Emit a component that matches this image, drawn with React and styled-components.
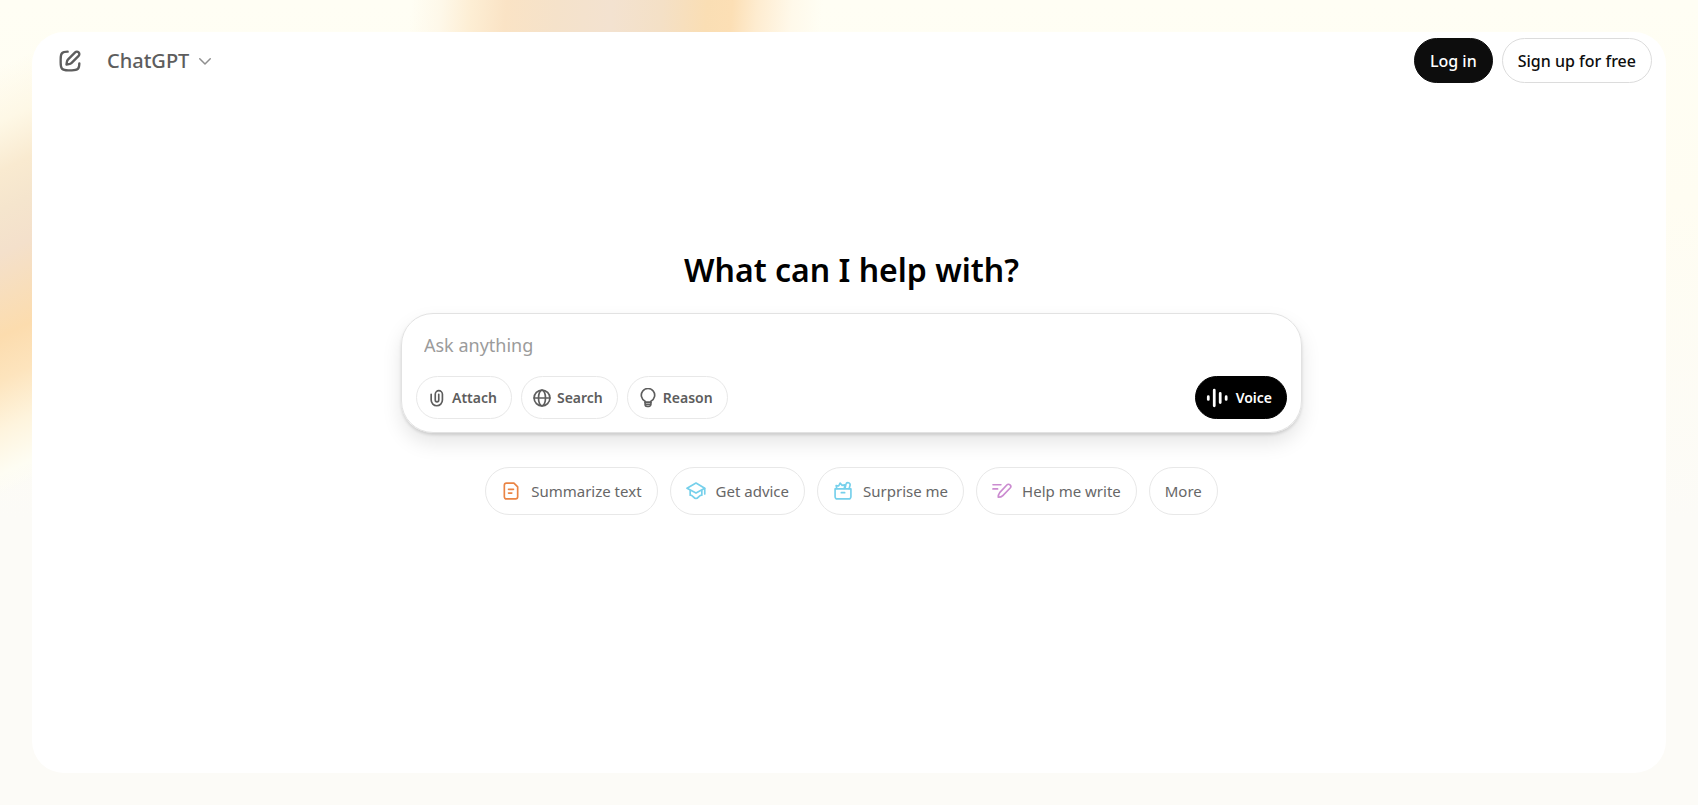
import React from 'react';
import styled, {createGlobalStyle, css, ThemeProvider} from 'styled-components';

const theme = {
    colors: {
        black: '#000000',
        ink: '#0d0d0d',
        darkGrey: '#5d5d5d',
        grey: '#9b9b9b',
        border: '#e8e8e8',
        white: '#ffffff',
    },
    font: '"Noto Sans", "Open Sans", sans-serif',
};

const GlobalStyle = createGlobalStyle`
  * {
    box-sizing: border-box;
  }
  body {
    margin: 0;
    font-family: ${({theme}) => theme.font};
    color: ${({theme}) => theme.colors.ink};
  }
  button, input {
    font-family: inherit;
  }
`;

const Page = styled.div`
  min-height: 100vh;
  display: flex;
  padding: 32px;
  background:
    linear-gradient(95deg, transparent 410px, #fef8e9 440px, #fdeed4 470px, #fae3c5 505px, #f5e2ca 555px, #f3e2d0 610px, #f4e0c6 660px, #fadeb4 705px, #fcdfb5 730px, #feecd0 755px, #fff9ea 790px, transparent 820px) top left / 100% 32px no-repeat,
    linear-gradient(155deg, transparent 60px, #fef8e6 110px, #f9ead0 155px, #f5e5cd 190px, #f4e0cb 230px, #f8debb 270px, #fcdcae 305px, #fde4bd 345px, #fef4dd 390px, #fefdf3 430px, transparent 450px) top left / 32px 100% no-repeat,
    linear-gradient(180deg, #fffef4 0, #fffdf2 200px, #fcfbf7 520px);
`;

const Panel = styled.div`
  flex: 1;
  display: flex;
  flex-direction: column;
  border-radius: 32px;
  ${({theme}) => css`
    background-color: ${theme.colors.white};
  `};
`;

const Header = styled.header`
  display: flex;
  align-items: center;
  justify-content: space-between;
  padding: 6px 14px 0 24px;
`;

const HeaderGroup = styled.div`
  display: flex;
  align-items: center;
  gap: ${({$gap}) => $gap}px;
`;

const IconButton = styled.button`
  display: flex;
  padding: 0;
  border: 0;
  background: none;
  cursor: pointer;
  color: ${({theme}) => theme.colors.darkGrey};
`;

const ModelButton = styled(IconButton)`
  align-items: center;
  gap: 7px;
  font-size: 20px;
  font-weight: 500;
  line-height: 28px;
`;

const AuthButton = styled.button`
  height: 45px;
  padding: 0 15px;
  border-radius: 23px;
  font-size: 16px;
  font-weight: 500;
  cursor: pointer;
  ${({theme, $primary}) => css`
    color: ${$primary ? theme.colors.white : theme.colors.ink};
    background-color: ${$primary ? theme.colors.ink : theme.colors.white};
    border: 1px solid ${$primary ? theme.colors.ink : '#dcdcdc'};
  `};
`;

const Main = styled.main`
  flex: 1;
  display: flex;
  flex-direction: column;
  align-items: center;
  padding: 164px 20px 32px 25px;
`;

const Title = styled.h1`
  margin: 0 0 20px;
  font-size: 32px;
  font-weight: 600;
  line-height: 46px;
  color: ${({theme}) => theme.colors.black};
`;

const Composer = styled.form`
  width: 100%;
  max-width: 901px;
  padding: 17px 14px 13px;
  border: 1px solid #e2e2e2;
  border-radius: 32px;
  box-shadow: 0 10px 20px rgba(0, 0, 0, 0.1), 0 2px 3px rgba(0, 0, 0, 0.12);
`;

const Prompt = styled.input`
  display: block;
  width: 100%;
  height: 28px;
  margin-bottom: 17px;
  padding: 0 8px;
  border: 0;
  outline: 0;
  background: none;
  font-size: 18px;
  &::placeholder {
    color: ${({theme}) => theme.colors.grey};
  }
`;

const ComposerFooter = styled.div`
  display: flex;
  justify-content: space-between;
`;

const Tools = styled.div`
  display: flex;
  gap: 9px;
`;

const ToolButton = styled.button`
  display: flex;
  align-items: center;
  gap: ${({$dark}) => ($dark ? 8 : 5)}px;
  height: 43px;
  padding: 0 14px 0 10px;
  border-radius: 22px;
  font-size: 14px;
  font-weight: 600;
  cursor: pointer;
  ${({theme, $dark}) => css`
    color: ${$dark ? theme.colors.white : theme.colors.darkGrey};
    background-color: ${$dark ? theme.colors.black : theme.colors.white};
    border: 1px solid ${$dark ? theme.colors.black : theme.colors.border};
  `};
`;

const Suggestions = styled.div`
  display: flex;
  flex-wrap: wrap;
  justify-content: center;
  gap: 12px;
  margin-top: 34px;
`;

const Suggestion = styled.button`
  display: flex;
  align-items: center;
  gap: 10px;
  height: 48px;
  padding: 0 15px;
  border-radius: 24px;
  font-size: 15px;
  background: none;
  cursor: pointer;
  ${({theme}) => css`
    color: #676767;
    border: 1px solid ${theme.colors.border};
  `};
`;

const Glyph = ({size = 20, width = 2, color = 'currentColor', children}) => (
    <svg
        width={size}
        height={size}
        viewBox="0 0 24 24"
        fill="none"
        stroke={color}
        strokeWidth={width}
        strokeLinecap="round"
        strokeLinejoin="round"
        aria-hidden="true"
    >
        {children}
    </svg>
);

const ComposeIcon = () => (
    <Glyph size={28}>
        <path d="M10 4C5.200 4 4 5.200 4 10.400v3.200C4 18.800 5.200 20 10.400 20h3.200C18.800 20 20 18.800 20 14" />
        <path d="M16.400 4.600a2.100 2.100 0 0 1 3 3l-6 6c-.6.6-1.400 1-2.300 1.100l-2.100.3.300-2.100c.1-.9.500-1.700 1.100-2.300z" />
    </Glyph>
);

const ChevronIcon = () => (
    <Glyph size={18}>
        <path d="M5 9l7 7 7-7" stroke="#8f8f8f" />
    </Glyph>
);

const AttachIcon = () => (
    <Glyph>
        <path d="M5 7.500v7a6.750 6.750 0 0 0 13.500 0V7.500a4.300 4.300 0 0 0-8.600 0v7a2.100 2.100 0 0 0 4.200 0v-7" />
    </Glyph>
);

const GlobeIcon = () => (
    <Glyph>
        <circle cx="12" cy="12" r="9.500" />
        <ellipse cx="12" cy="12" rx="4.200" ry="9.500" />
        <path d="M2.500 12h19" />
    </Glyph>
);

const BulbIcon = () => (
    <Glyph>
        <path d="M8.500 17v-1.200a8 8 0 1 1 7 0V17z" />
        <path d="M8.500 17v2.500a2.500 2.500 0 0 0 2.500 2.500h2a2.500 2.500 0 0 0 2.500-2.500V17M8.500 19.500h7" />
    </Glyph>
);

const VoiceIcon = () => (
    <Glyph size={22} width={3}>
        <path d="M2.500 10.500v3M9 3.500v17M15.500 7v10M22 10.500v3" />
    </Glyph>
);

const SummaryIcon = () => (
    <Glyph color="#ea8444">
        <path d="M6.500 2.500h9L20 7v12a2.500 2.500 0 0 1-2.500 2.500h-11A2.500 2.500 0 0 1 4 19V5a2.500 2.500 0 0 1 2.500-2.500z" />
        <path d="M9 10h6M9 14.500h4" />
    </Glyph>
);

const AdviceIcon = () => (
    <Glyph color="#76d0eb">
        <path d="M12 2.500L1.200 8.700 12 14.500l10.500-5.800z" />
        <path d="M5 11.500V17c3.500 0 4 4 7 4s3.500-4 7-4v-5.500M22.500 9v6.500" />
    </Glyph>
);

const SurpriseIcon = () => (
    <Glyph color="#76d0eb">
        <path d="M2.500 9.500h19V19a2.500 2.500 0 0 1-2.500 2.500H5A2.500 2.500 0 0 1 2.500 19zM10 14h4" />
        <path d="M4.500 9L3.800 5.500l3 .5L8.500 2.500l2.500 2.700 3-.7-.4 4.500M14.500 8.500l1-4.500a2.500 2.500 0 0 1 5 1.200l-1.200 4" />
    </Glyph>
);

const WriteIcon = () => (
    <Glyph color="#cb8bd0">
        <path d="M1.200 4.500h9.500M1.200 9.500h5.500" />
        <path d="M17.800 4.800a2.600 2.600 0 0 1 4 3.600L13 17.500c-1.200 1.200-3 2-5.500 2 0-2.500.5-4 1.700-5.500z" />
    </Glyph>
);

const tools = [
    {label: 'Attach', Icon: AttachIcon},
    {label: 'Search', Icon: GlobeIcon},
    {label: 'Reason', Icon: BulbIcon},
];

const suggestions = [
    {label: 'Summarize text', Icon: SummaryIcon},
    {label: 'Get advice', Icon: AdviceIcon},
    {label: 'Surprise me', Icon: SurpriseIcon},
    {label: 'Help me write', Icon: WriteIcon},
    {label: 'More'},
];

const App = () => {
    return (
        <ThemeProvider theme={theme}>
            <GlobalStyle />
            <Page>
                <Panel>
                    <Header>
                        <HeaderGroup $gap={23}>
                            <IconButton type="button" aria-label="New chat"><ComposeIcon /></IconButton>
                            <ModelButton type="button">ChatGPT<ChevronIcon /></ModelButton>
                        </HeaderGroup>
                        <HeaderGroup $gap={9}>
                            <AuthButton type="button" $primary>Log in</AuthButton>
                            <AuthButton type="button">Sign up for free</AuthButton>
                        </HeaderGroup>
                    </Header>
                    <Main>
                        <Title>What can I help with?</Title>
                        <Composer onSubmit={(e) => e.preventDefault()}>
                            <Prompt type="text" placeholder="Ask anything" aria-label="Ask anything" />
                            <ComposerFooter>
                                <Tools>
                                    {tools.map(({label, Icon}) => (
                                        <ToolButton key={label} type="button"><Icon />{label}</ToolButton>
                                    ))}
                                </Tools>
                                <ToolButton type="button" $dark><VoiceIcon />Voice</ToolButton>
                            </ComposerFooter>
                        </Composer>
                        <Suggestions>
                            {suggestions.map(({label, Icon}) => (
                                <Suggestion key={label} type="button">{Icon && <Icon />}{label}</Suggestion>
                            ))}
                        </Suggestions>
                    </Main>
                </Panel>
            </Page>
        </ThemeProvider>
    )
}

export default App;
